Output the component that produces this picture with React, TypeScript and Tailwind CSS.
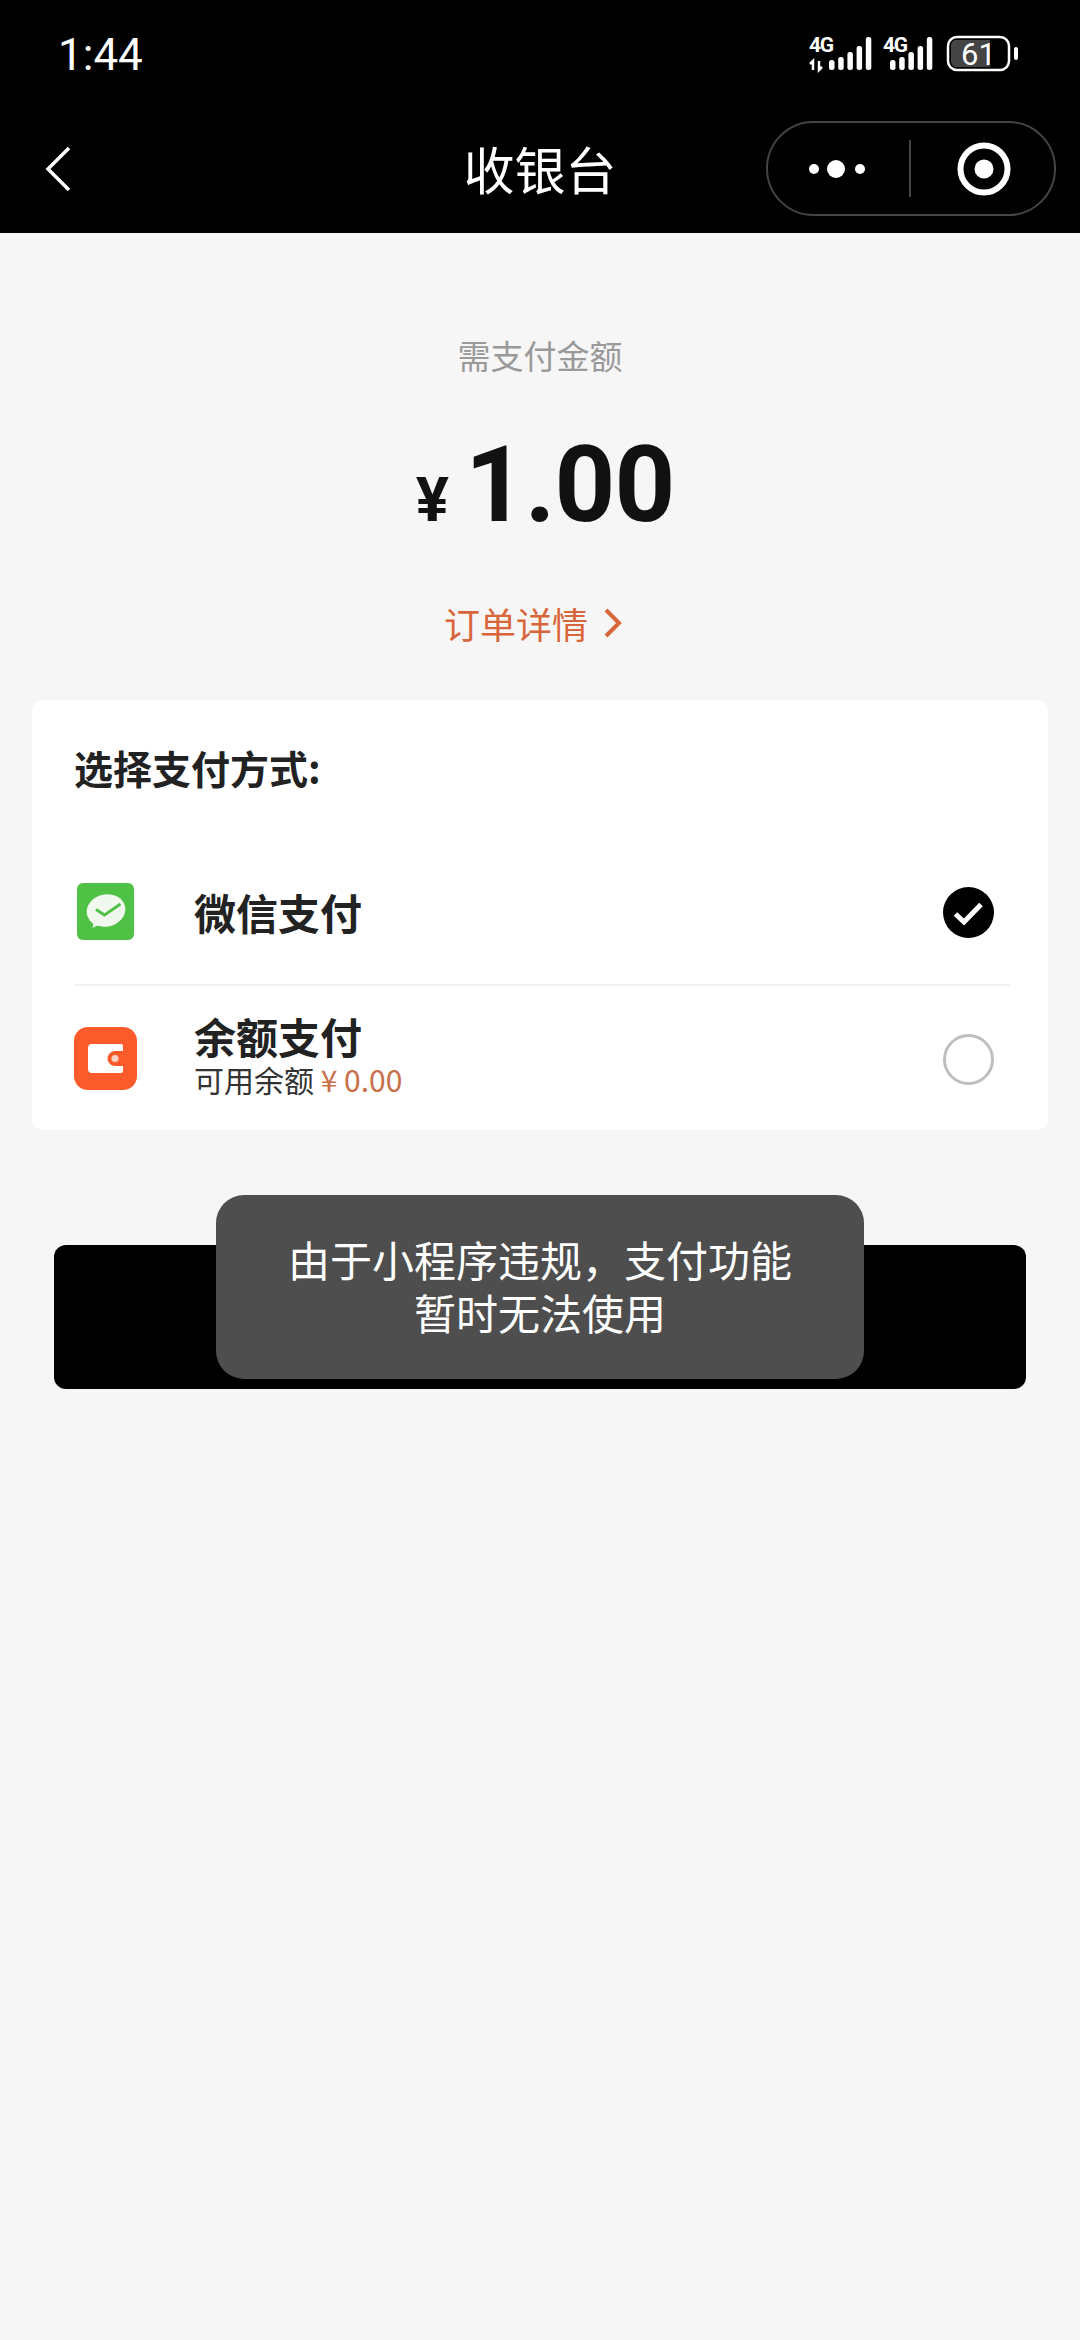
import React from 'react';

const cjk = 'font-["Noto_Sans_CJK_SC","Noto_Sans",sans-serif]';

const SignalBars: React.FC<{ bars: number[] }> = ({ bars }) => (
  <>
    {bars.map((top, i) => (
      <rect key={i} x={20 + i * 9.2} y={top} width="5.500" height={35 - top} rx="2.500" fill="#fff" />
    ))}
  </>
);

const StatusIcons: React.FC = () => (
  <svg width="214" height="46" viewBox="0 -6 214 46" className="-mt-[4px] shrink-0">
    {/* first sim */}
    <text x="0" y="17" fontSize="21" fontWeight="700" fill="#fff" fontFamily="Roboto, sans-serif" textLength="25">4G</text>
    <path d="M4 35v-9l-3 3M10 26v9l3-3" stroke="#fff" strokeWidth="2.500" fill="none" />
    <SignalBars bars={[25, 22, 17, 11, 2]} />
    {/* second sim */}
    <g transform="translate(74,0)">
      <text x="0" y="17" fontSize="21" fontWeight="700" fill="#fff" fontFamily="Roboto, sans-serif" textLength="25">4G</text>
      <g transform="translate(-13,0)">
        <SignalBars bars={[25, 22, 17, 11, 2]} />
      </g>
    </g>
    {/* battery */}
    <g transform="translate(137,0)">
      <rect x="2" y="2" width="61" height="33" rx="9" fill="none" stroke="#fff" strokeWidth="2.500" />
      <path d="M9 5h35v27H9a6 6 0 0 1-4-5V10a6 6 0 0 1 4-5z" fill="#444" />
      <text x="15" y="30" fontSize="31" fill="#fff" fontFamily="Roboto, sans-serif">61</text>
      <rect x="68" y="12" width="4" height="13" rx="2" fill="#fff" />
    </g>
  </svg>
);

const Capsule: React.FC = () => (
  <div className="flex h-[95px] w-[290px] items-center rounded-full border-2 border-[#444]">
    <div className="flex flex-1 items-center justify-center">
      <svg width="70" height="20" viewBox="0 0 70 20">
        <circle cx="11" cy="10" r="5" fill="#fff" />
        <circle cx="33" cy="10" r="9" fill="#fff" />
        <circle cx="57" cy="10" r="5" fill="#fff" />
      </svg>
    </div>
    <div className="h-[57px] w-[2px] bg-[#444]" />
    <div className="flex flex-1 items-center justify-center pl-[3px]">
      <svg width="54" height="54" viewBox="0 0 54 54">
        <circle cx="27" cy="27" r="23.500" fill="none" stroke="#fff" strokeWidth="6" />
        <circle cx="27" cy="27" r="9.500" fill="#fff" />
      </svg>
    </div>
  </div>
);

const WechatIcon: React.FC = () => (
  <svg width="57" height="57" viewBox="0 0 57 57">
    <rect width="57" height="57" rx="6" fill="#4fc145" />
    <ellipse cx="29" cy="27.500" rx="19.500" ry="16" transform="rotate(-12 29 27.500)" fill="#f1f8ee" />
    <path d="M17 36l-1.500 9 9-4.500z" fill="#f1f8ee" />
    <path d="M19 26.500l8.500 5.500 16-11" fill="none" stroke="#4fc145" strokeWidth="2.800" />
  </svg>
);

const WalletIcon: React.FC = () => (
  <svg width="63" height="63" viewBox="0 0 63 63">
    <rect width="63" height="63" rx="14" fill="#fb5a2a" />
    <path d="M18 17h29a2 2 0 0 1 2 2v5H41a7.500 7.500 0 0 0 0 15h8v5a2 2 0 0 1-2 2H18a4 4 0 0 1-4-4V21a4 4 0 0 1 4-4z" fill="#fff" />
    <circle cx="41" cy="31.500" r="3.500" fill="#fbd3c4" />
  </svg>
);

const Radio: React.FC<{ checked?: boolean }> = ({ checked }) =>
  checked ? (
    <svg width="51" height="51" viewBox="0 0 51 51" className="mt-[2px]">
      <circle cx="25.500" cy="25.500" r="25.500" fill="#000" />
      <path d="M12.500 27l8.500 8 17-17.500" fill="none" stroke="#fff" strokeWidth="5" />
    </svg>
  ) : (
    <div className="mt-[2px] h-[51px] w-[51px] rounded-full border-[3px] border-[#bfbfbf]" />
  );

export default function App() {
  return (
    <div className={`relative min-h-[2340px] w-[1080px] bg-[#f6f6f6] ${cjk}`}>
      <header className="h-[233px] bg-black text-white">
        <div className="flex h-[121px] items-start justify-between pl-[58px] pr-[57px] pt-[33px]">
          <span className="font-['Roboto',sans-serif] text-[44px] font-normal leading-[44px]">1:44</span>
          <StatusIcons />
        </div>
        <div className="grid grid-cols-[1fr_auto_1fr] items-center px-[24px]">
          <svg width="30" height="48" viewBox="0 0 30 48" className="ml-[20px]">
            <path d="M25 3L4 24l21 21" fill="none" stroke="#fff" strokeWidth="3.500" />
          </svg>
          <div className="text-[51px] font-normal leading-[95px]">收银台</div>
          <div className="flex justify-end">
            <Capsule />
          </div>
        </div>
      </header>

      <main className="flex flex-col items-center">
        <div className="mt-[99px] text-[33px] leading-[46px] text-[#999]">需支付金额</div>
        <div className="ml-[10px] mt-[52px] flex items-baseline gap-[16px] font-['Roboto',sans-serif] font-bold leading-[110px] text-[#111]">
          <span className="text-[62px]">¥</span>
          <span className="text-[106px] tracking-[-1px]">1.00</span>
        </div>
        <div className="-ml-[14px] mt-[43px] flex items-center gap-[16px] text-[36px] leading-[50px] text-[#d9653a]">
          <span>订单详情</span>
          <svg width="18" height="30" viewBox="0 0 18 30">
            <path d="M2 2l13 13L2 28" fill="none" stroke="#d9653a" strokeWidth="4" />
          </svg>
        </div>

        <section className="mt-[52px] w-[1016px] rounded-[10px] bg-white pl-[42px] pr-[38px] pt-[41px]">
          <div className="text-[39px] font-semibold leading-[52px] text-[#222]">选择支付方式:</div>
          <div className="mt-[46px] flex h-[147px] items-center border-b-2 border-[#f3f3f3] pl-[3px] pr-[16px]">
            <WechatIcon />
            <span className="ml-[60px] flex-1 text-[42px] font-bold leading-[56px] text-[#222]">微信支付</span>
            <Radio checked />
          </div>
          <div className="flex h-[144px] items-center pr-[16px]">
            <WalletIcon />
            <div className="mb-[4px] ml-[57px] flex-1">
              <div className="text-[42px] font-bold leading-[46px] text-[#222]">余额支付</div>
              <div className="text-[30px] leading-[40px] text-[#333]">
                可用余额 <span className="text-[#c8704a]">¥ 0.00</span>
              </div>
            </div>
            <Radio />
          </div>
        </section>

        <button className="mt-[115px] h-[144px] w-[972px] rounded-[12px] bg-black" />
      </main>

      <div className="absolute left-1/2 top-[1195px] flex h-[184px] w-[648px] -translate-x-1/2 items-center justify-center rounded-[28px] bg-[#4e4e4e] pb-[4px] text-center text-[42px] leading-[53px] text-white">
        <div>
          由于小程序违规，支付功能
          <br />
          暂时无法使用
        </div>
      </div>
    </div>
  );
}
